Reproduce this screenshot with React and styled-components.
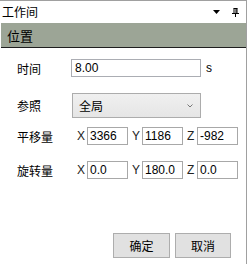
import styled, { createGlobalStyle } from "styled-components";

const Global = createGlobalStyle`
  body {
    margin: 0;
    background: #ffffff;
    font-family: "Noto Sans CJK SC", "Noto Sans", sans-serif;
    font-size: 12px;
    color: #000;
  }
`;

const axes = [
  { label: "平移量", values: [["X", "3366"], ["Y", "1186"], ["Z", "-982"]] },
  { label: "旋转量", values: [["X", "0.0"], ["Y", "180.0"], ["Z", "0.0"]] },
];

export default function App() {
  return (
    <>
      <Global />
      <Panel>
        <TitleBar>
          <span>工作间</span>
          <Tools>
            <svg width="8" height="4" viewBox="0 0 8 4">
              <path d="M0 0 H7 L3.5 4 Z" fill="#000" />
            </svg>
            <svg width="7" height="9" viewBox="0 0 7 9">
              <path d="M1.5 0.5 H5.5 M2 0.5 V5 M5 0.5 V5 M4 0.5 V5 M0 5.5 H7 M3.5 5.5 V9" stroke="#000" strokeWidth="1" fill="none" />
            </svg>
          </Tools>
        </TitleBar>
        <SectionHeader>位置</SectionHeader>
        <Form>
          <Row $h={18}>
            <Label>时间</Label>
            <TextBox $w={130}>8.00</TextBox>
            <Unit>s</Unit>
          </Row>
          <Row $h={25} $top={16}>
            <Label>参照</Label>
            <Select>
              <span>全局</span>
              <svg width="6" height="4" viewBox="0 0 6 4">
                <path d="M0.5 0.5 L3 3 L5.5 0.5" stroke="#777" fill="none" />
              </svg>
            </Select>
          </Row>
          {axes.map((row, i) => (
            <Row key={row.label} $h={18} $top={i === 0 ? 9 : 16}>
              <Label>{row.label}</Label>
              <Axes>
                {row.values.map(([axis, value]) => (
                  <Axis key={axis}>
                    <AxisName>{axis}</AxisName>
                    <SmallBox>{value}</SmallBox>
                  </Axis>
                ))}
              </Axes>
            </Row>
          ))}
        </Form>
        <Buttons>
          <Button $w={57}>确定</Button>
          <Button $w={56}>取消</Button>
        </Buttons>
      </Panel>
    </>
  );
}

const Panel = styled.div`
  width: 246px;
  height: 263px;
  border-top: 1px solid #a0a0a0;
  border-right: 1px solid #a0a0a0;
  display: flex;
  flex-direction: column;
`;

const TitleBar = styled.div`
  height: 22px;
  display: flex;
  align-items: center;
  justify-content: space-between;
  padding: 0 7px 0 2px;
  line-height: 1;
`;

const Tools = styled.div`
  display: flex;
  align-items: center;
  gap: 11px;
  svg {
    display: block;
  }
`;

const SectionHeader = styled.div`
  margin-left: 1px;
  height: 24px;
  background: #9ca596;
  border-bottom: 1px solid #1e1e1e;
  padding-left: 6px;
  display: flex;
  align-items: center;
  font-size: 13px;
`;

const Form = styled.div`
  padding: 11px 0 0 17px;
  display: flex;
  flex-direction: column;
`;

const Row = styled.div`
  display: flex;
  align-items: center;
  height: ${(p) => p.$h}px;
  margin-top: ${(p) => p.$top || 0}px;
`;

const Label = styled.div`
  width: 54px;
  flex: none;
`;

const TextBox = styled.div`
  box-sizing: border-box;
  width: ${(p) => p.$w}px;
  height: 100%;
  border: 1px solid #abadb3;
  padding-left: 3px;
  display: flex;
  align-items: center;
  font-family: "Liberation Sans", "Noto Sans", sans-serif;
  font-size: 12px;
`;

const Unit = styled.span`
  margin-left: 5px;
  font-family: "Liberation Sans", sans-serif;
`;

const Select = styled.div`
  box-sizing: border-box;
  margin-left: 1px;
  width: 129px;
  height: 100%;
  border: 1px solid #acacac;
  background: linear-gradient(#f0f0f0, #e5e5e5);
  display: flex;
  align-items: center;
  justify-content: space-between;
  padding: 0 7px 0 6px;
`;

const Axes = styled.div`
  display: flex;
  gap: 4px;
  padding-left: 6px;
  height: 100%;
`;

const Axis = styled.div`
  display: flex;
  align-items: center;
  gap: 2px;
  height: 100%;
`;

const AxisName = styled.span`
  width: 8px;
  font-family: "Liberation Sans", sans-serif;
  color: #222;
`;

const SmallBox = styled.div`
  box-sizing: border-box;
  width: 41px;
  height: 100%;
  border: 1px solid #a8a8a8;
  padding-left: 2px;
  display: flex;
  align-items: center;
  font-family: "Liberation Sans", sans-serif;
`;

const Buttons = styled.div`
  margin-top: auto;
  margin-bottom: 6px;
  display: flex;
  justify-content: flex-end;
  gap: 5px;
  padding-right: 15px;
`;

const Button = styled.div`
  box-sizing: border-box;
  width: ${(p) => p.$w}px;
  height: 25px;
  border: 1px solid #adadad;
  background: #e1e1e1;
  display: flex;
  align-items: center;
  justify-content: center;
`;
